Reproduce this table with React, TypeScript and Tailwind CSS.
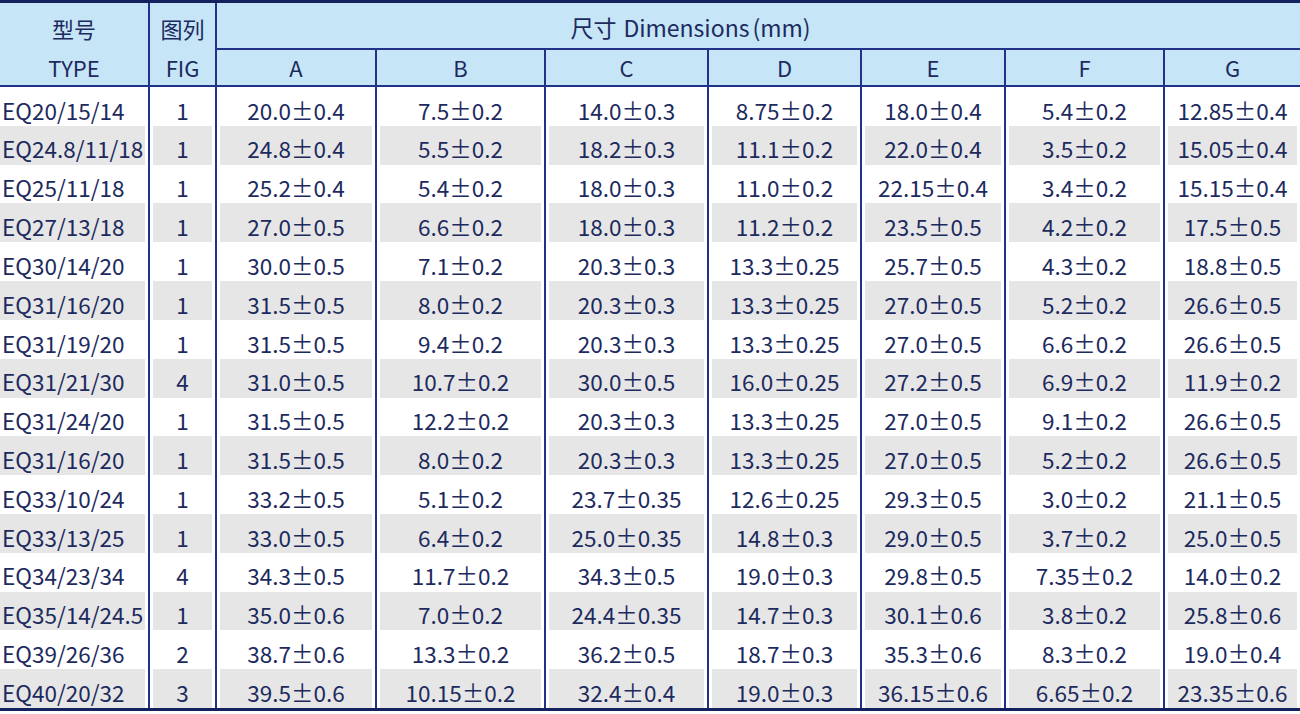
import React from "react";

const rows: string[][] = [
  ["EQ20/15/14", "1", "20.0±0.4", "7.5±0.2", "14.0±0.3", "8.75±0.2", "18.0±0.4", "5.4±0.2", "12.85±0.4"],
  ["EQ24.8/11/18", "1", "24.8±0.4", "5.5±0.2", "18.2±0.3", "11.1±0.2", "22.0±0.4", "3.5±0.2", "15.05±0.4"],
  ["EQ25/11/18", "1", "25.2±0.4", "5.4±0.2", "18.0±0.3", "11.0±0.2", "22.15±0.4", "3.4±0.2", "15.15±0.4"],
  ["EQ27/13/18", "1", "27.0±0.5", "6.6±0.2", "18.0±0.3", "11.2±0.2", "23.5±0.5", "4.2±0.2", "17.5±0.5"],
  ["EQ30/14/20", "1", "30.0±0.5", "7.1±0.2", "20.3±0.3", "13.3±0.25", "25.7±0.5", "4.3±0.2", "18.8±0.5"],
  ["EQ31/16/20", "1", "31.5±0.5", "8.0±0.2", "20.3±0.3", "13.3±0.25", "27.0±0.5", "5.2±0.2", "26.6±0.5"],
  ["EQ31/19/20", "1", "31.5±0.5", "9.4±0.2", "20.3±0.3", "13.3±0.25", "27.0±0.5", "6.6±0.2", "26.6±0.5"],
  ["EQ31/21/30", "4", "31.0±0.5", "10.7±0.2", "30.0±0.5", "16.0±0.25", "27.2±0.5", "6.9±0.2", "11.9±0.2"],
  ["EQ31/24/20", "1", "31.5±0.5", "12.2±0.2", "20.3±0.3", "13.3±0.25", "27.0±0.5", "9.1±0.2", "26.6±0.5"],
  ["EQ31/16/20", "1", "31.5±0.5", "8.0±0.2", "20.3±0.3", "13.3±0.25", "27.0±0.5", "5.2±0.2", "26.6±0.5"],
  ["EQ33/10/24", "1", "33.2±0.5", "5.1±0.2", "23.7±0.35", "12.6±0.25", "29.3±0.5", "3.0±0.2", "21.1±0.5"],
  ["EQ33/13/25", "1", "33.0±0.5", "6.4±0.2", "25.0±0.35", "14.8±0.3", "29.0±0.5", "3.7±0.2", "25.0±0.5"],
  ["EQ34/23/34", "4", "34.3±0.5", "11.7±0.2", "34.3±0.5", "19.0±0.3", "29.8±0.5", "7.35±0.2", "14.0±0.2"],
  ["EQ35/14/24.5", "1", "35.0±0.6", "7.0±0.2", "24.4±0.35", "14.7±0.3", "30.1±0.6", "3.8±0.2", "25.8±0.6"],
  ["EQ39/26/36", "2", "38.7±0.6", "13.3±0.2", "36.2±0.5", "18.7±0.3", "35.3±0.6", "8.3±0.2", "19.0±0.4"],
  ["EQ40/20/32", "3", "39.5±0.6", "10.15±0.2", "32.4±0.4", "19.0±0.3", "36.15±0.6", "6.65±0.2", "23.35±0.6"],
];

const cols = "grid-cols-[148px_67px_160px_169px_163px_153px_144px_159px_137px]";
const line = "border-[#22318a]";

export default function App() {
  return (
    <div
      className="w-[1300px] h-[714px] bg-white text-[#1c2a5e] text-[22.5px] overflow-hidden"
      style={{ fontFamily: '"Noto Sans CJK SC", "Noto Sans", sans-serif' }}
    >
      <div className="border-t-[3px] border-b-[3px] border-[#14215f]">
        {/* Header */}
        <div className={`grid ${cols} grid-rows-[45px_37px] border-b-2 ${line} bg-[#c6e5f6] text-[22px]`}>
          <div className="row-span-2 grid grid-rows-[45px_37px] leading-none">
            <div className="flex items-center justify-center pt-1">型号</div>
            <div className="flex items-center justify-center">TYPE</div>
          </div>
          <div className={`row-span-2 grid grid-rows-[45px_37px] border-l-2 ${line} leading-none`}>
            <div className="flex items-center justify-center pt-1">图列</div>
            <div className="flex items-center justify-center">FIG</div>
          </div>
          <div className={`col-span-7 flex items-center justify-center border-l-2 border-b-2 ${line} leading-none pt-1 pr-[136px] h-[47px] text-[23px]`}>
            <span>尺寸</span>
            <span className="ml-[7px]">Dimensions</span>
            <span className="ml-[3px]">(mm)</span>
          </div>
          {["A", "B", "C", "D", "E", "F", "G"].map((h) => (
            <div key={h} className={`flex items-center justify-center border-l-2 ${line} leading-none`}>
              {h}
            </div>
          ))}
        </div>
        {/* Body */}
        <div className={`grid ${cols} grid-rows-16 h-[621px]`}>
          {rows.map((r, ri) =>
            r.map((c, ci) => (
              <div
                key={`${ri}-${ci}`}
                className={ci === 0 ? "pr-[3px]" : `border-l-2 ${line} px-[3px]`}
              >
                <div
                  className={`h-full flex items-center leading-none pt-[7px] whitespace-nowrap ${
                    ri % 2 === 1 ? "bg-[#e6e6e6]" : ""
                  } ${ci === 0 ? "justify-start pl-[2px]" : "justify-center"}`}
                >
                  {c}
                </div>
              </div>
            ))
          )}
        </div>
      </div>
    </div>
  );
}
